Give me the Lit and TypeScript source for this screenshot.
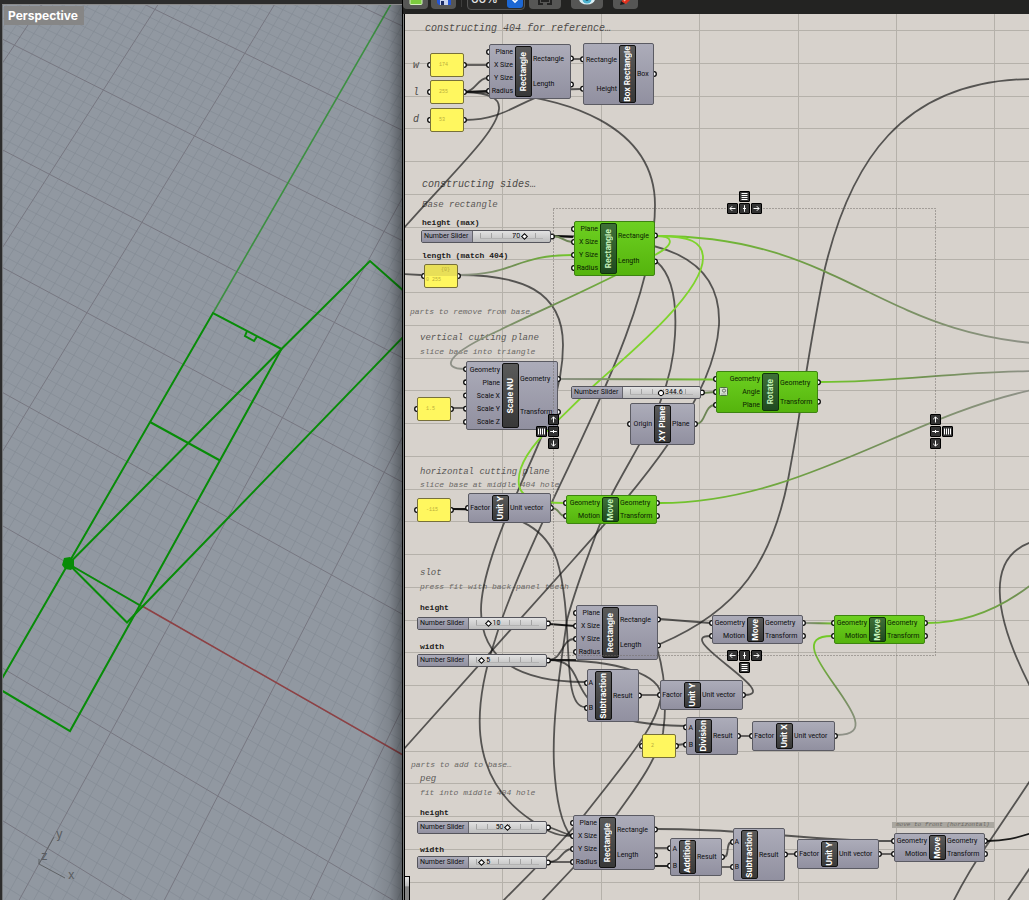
import { LitElement, html, svg, css, nothing } from "lit";
import { customElement } from "lit/decorators.js";
import { classMap } from "lit/directives/class-map.js";
import { styleMap } from "lit/directives/style-map.js";

/* ---------- 3D viewport ---------- */

type Pt = [number, number];

/* Solves the projective map that carries four ground-plane points to the screen. */
function projection(pairs: [Pt, Pt][]): (u: number, v: number) => Pt {
  const m: number[][] = [];
  for (const [[u, v], [x, y]] of pairs) {
    m.push([u, v, 1, 0, 0, 0, -u * x, -v * x, x]);
    m.push([0, 0, 0, u, v, 1, -u * y, -v * y, y]);
  }
  for (let c = 0; c < 8; c++) {
    let p = c;
    for (let r = c + 1; r < 8; r++) if (Math.abs(m[r][c]) > Math.abs(m[p][c])) p = r;
    [m[c], m[p]] = [m[p], m[c]];
    for (let r = 0; r < 8; r++) {
      if (r === c) continue;
      const f = m[r][c] / m[c][c];
      for (let k = c; k < 9; k++) m[r][k] -= f * m[c][k];
    }
  }
  const h = m.map((row, i) => row[8] / row[i]);
  return (u, v) => {
    const w = h[6] * u + h[7] * v + 1;
    return [(h[0] * u + h[1] * v + h[2]) / w, (h[3] * u + h[4] * v + h[5]) / w];
  };
}

const ground = projection([
  [[-2, 4], [103.3, 90]],
  [[-1, 1], [29.3, 407.3]],
  [[2, 2], [384.3, 472.3]],
  [[3, -1], [328.3, 861.7]],
]);

const gridLines = (major: boolean) => {
  let d = "";
  const seg = (a: Pt, b: Pt) => `M${a[0].toFixed(1)},${a[1].toFixed(1)}L${b[0].toFixed(1)},${b[1].toFixed(1)}`;
  for (let i = -50; i <= 60; i++) {
    if ((i % 10 === 0) !== major || (major && i === 0)) continue;
    d += seg(ground(i / 10, -4), ground(i / 10, 7));
  }
  for (let j = -40; j <= 70; j++) {
    if ((j % 10 === 0) !== major) continue;
    d += seg(ground(-5, j / 10), ground(6, j / 10));
  }
  return d;
};

@customElement("model-viewport")
export class ModelViewport extends LitElement {
  static styles = css`
    :host { display: block; position: relative; overflow: hidden; background: #9198a1;
      border-top: 1px solid #8b8b8b; border-left: 1px solid #74777a; }
    .scene { position: absolute; inset: 0; width: 100%; height: 100%; display: block; }
    .minor { stroke: #838a93; stroke-width: 1; opacity: .65; fill: none; }
    .major { stroke: #777781; stroke-width: 1; fill: none; }
    .curve { stroke: #078c07; stroke-width: 2; fill: none; }
    .axis-x { stroke: #8e4144; stroke-width: 1.6; }
    .axis-y { stroke: #3c8f41; stroke-width: 1.6; }
    .gizmo { stroke: #5f6265; stroke-width: 1; fill: none; }
    .gizmo-text { font: 12px "Inter", sans-serif; fill: #5a5d60; }
    .title { position: relative; display: block; width: fit-content; margin: 1px; padding: 0 6px 0 4px; background: #868686;
      color: #fff; font: 700 12px/19px "Inter", sans-serif; }
    .shade { position: absolute; inset: 0 0 0 auto; width: 32px;
      background: linear-gradient(90deg, rgba(0,0,0,0), rgba(0,0,0,.12) 60%, rgba(0,0,0,.38)); }
  `;
  render() {
    return html`
      <svg class="scene" role="img" aria-label="Perspective model">
        <g transform="translate(-3 -5)">
          <path class="minor" d=${gridLines(false)} />
          <path class="major" d=${gridLines(true)} />
          <line class="axis-y" x1="391" y1="4" x2="213" y2="313" />
          <line class="axis-x" x1="142" y1="606" x2="404" y2="755.5" />
          <path class="curve" d="M0,682 L213,313 L281.5,349 L165,560 L70,731 L0,689.5" />
          <path class="curve" d="M68.5,564 L281.5,349 L370,261 L405,292 M405,335 L127,622.5 L68.5,564 L141,606" />
          <path class="curve" d="M150,422 L220,460.5 M247,331 L245,336 L254,341 L257,336.5" />
          <path d="M64,558 L70,557 L74,560 L74,567 L71,570 L65,569 L62,565 Z" fill="#078c07" />
          <path class="gizmo" d="M39,859 L39,864 L54,837 M39,864 L65,878" />
          <text class="gizmo-text" x="56" y="838">y</text>
          <text class="gizmo-text" x="41" y="860">z</text>
          <text class="gizmo-text" x="68" y="879">x</text>
        </g>
      </svg>
      <div class="shade"></div>
      <span class="title">Perspective</span>
    `;
  }
}

/* ---------- Toolbar ---------- */

@customElement("canvas-toolbar")
export class CanvasToolbar extends LitElement {
  static styles = css`
    :host { display: flex; align-items: flex-end; height: 14px; padding-bottom: 5px; box-sizing: border-box;
      overflow: hidden; background: #232322; }
    .tool { flex: none; width: 25px; height: 20px; padding: 0; margin-right: 3px; border: 0; border-radius: 4px;
      background: #565655; display: grid; place-items: center; }
    .tool.wide { width: 32px; margin-right: 10px; }
    .rule { flex: none; width: 1px; height: 12px; margin: 0 5px 2px 2px; background: #3d3d3c; }
    .zoom { flex: none; position: relative; display: block; width: 58px; height: 20px; margin-right: 4px; }
    .zoom select { appearance: none; box-sizing: border-box; width: 100%; height: 100%; padding: 0 0 2px 3px; margin: 0;
      border: 1px solid #565655; border-radius: 4px; background: #2b2b2a; color: #e4e4e4;
      font: 500 12px/16px "Inter", sans-serif; }
    .chev { position: absolute; right: 1px; top: 0; pointer-events: none; }
  `;
  render() {
    return html`
      <button class="tool" aria-label="Open"><svg width="14" height="16"><rect x="1" y="1" width="12" height="12.5" rx="1" fill="#7ccb3e" stroke="#d5f0bf" /></svg></button>
      <button class="tool" aria-label="Save"><svg width="16" height="18"><path d="M1,1H15V15H3L1,13Z" fill="#2455d6" /><rect x="4" y="1" width="8" height="6" fill="#7aa0f5" /><rect x="4" y="10" width="8" height="5" fill="#c9d3ee" /><rect x="5" y="11" width="3" height="4" fill="#1c2c66" /></svg></button>
      <i class="rule"></i>
      <label class="zoom">
        <select aria-label="Zoom"><option>66%</option><option>100%</option></select>
        <svg class="chev" width="17" height="19"><rect width="16" height="19" rx="3" fill="#1c67d4" /><path d="M5,10 L8,13 L11,10" fill="none" stroke="#fff" stroke-width="1.6" /></svg>
      </label>
      <button class="tool wide" aria-label="Zoom extents"><svg width="16" height="18"><path d="M2,9V14H6M14,9V14H10M5,9H11V11H5Z" fill="none" stroke="#222" stroke-width="2" /></svg></button>
      <button class="tool wide" aria-label="Preview"><svg width="18" height="20"><ellipse cx="9" cy="10" rx="8" ry="5.5" fill="#d9eef5" /><circle cx="9" cy="10" r="4.6" fill="#4cb1cf" /><circle cx="9" cy="10" r="1.8" fill="#15313b" /></svg></button>
      <button class="tool" aria-label="Sketch"><svg width="18" height="20"><path d="M4,13 L12,3 L17,7 L9,15 Z" fill="#e0301e" /><path d="M3,16 L4,12 L8,15 Z" fill="#1d1d1d" /><path d="M7,12 L14,5" stroke="#ffb38f" stroke-width="1.4" /></svg></button>
    `;
  }
}

/* ---------- Node canvas ---------- */

interface Comp { x: number; y: number; w: number; h: number; bar: number; name: string; ins: string[]; outs: string[]; on?: boolean; chip?: boolean }
interface Slider { x: number; y: number; label: string; value: number; max: number; before?: boolean; round?: boolean }
interface Panel { x: number; y: number; text: string; index?: string; label: string }
interface Note { x: number; y: number; text: string; kind: "xl" | "lg" | "md" | "head" | "tag" }
type Tone = "dark" | "black" | "lime" | "fade" | "rise" | "olive";
interface Wire { d: string; tone: Tone; from?: Pt; to?: Pt }

/* World position of the top left corner of the visible canvas. */
const VIEW: Pt = [405, 14];

const rectIns = ["Plane", "X Size", "Y Size", "Radius"];
const rectOuts = ["Rectangle", "Length"];
const moveIns = ["Geometry", "Motion"];
const moveOuts = ["Geometry", "Transform"];

const comps: Comp[] = [
  { x: 489, y: 44, w: 82, h: 55, bar: 26, name: "Rectangle", ins: rectIns, outs: rectOuts },
  { x: 583, y: 43, w: 71, h: 62, bar: 36, name: "Box Rectangle", ins: ["Rectangle", "Height"], outs: ["Box"] },
  { x: 574, y: 221, w: 81, h: 55, bar: 26, name: "Rectangle", ins: rectIns, outs: rectOuts, on: true },
  { x: 466, y: 361, w: 92, h: 69, bar: 36, name: "Scale NU", ins: ["Geometry", "Plane", "Scale X", "Scale Y", "Scale Z"], outs: moveOuts },
  { x: 716, y: 371, w: 102, h: 42, bar: 46, name: "Rotate", ins: ["Geometry", "Angle", "Plane"], outs: moveOuts, on: true, chip: true },
  { x: 630, y: 403, w: 65, h: 42, bar: 24, name: "XY Plane", ins: ["Origin"], outs: ["Plane"] },
  { x: 468, y: 493, w: 83, h: 30, bar: 24, name: "Unit Y", ins: ["Factor"], outs: ["Unit vector"] },
  { x: 566, y: 495, w: 91, h: 29, bar: 36, name: "Move", ins: moveIns, outs: moveOuts, on: true },
  { x: 576, y: 605, w: 82, h: 55, bar: 26, name: "Rectangle", ins: rectIns, outs: rectOuts },
  { x: 712, y: 615, w: 91, h: 29, bar: 35, name: "Move", ins: moveIns, outs: moveOuts },
  { x: 834, y: 615, w: 91, h: 29, bar: 35, name: "Move", ins: moveIns, outs: moveOuts, on: true },
  { x: 587, y: 669, w: 52, h: 53, bar: 8, name: "Subtraction", ins: ["A", "B"], outs: ["Result"] },
  { x: 660, y: 680, w: 83, h: 30, bar: 24, name: "Unit Y", ins: ["Factor"], outs: ["Unit vector"] },
  { x: 686, y: 717, w: 52, h: 38, bar: 9, name: "Division", ins: ["A", "B"], outs: ["Result"] },
  { x: 752, y: 721, w: 83, h: 30, bar: 24, name: "Unit X", ins: ["Factor"], outs: ["Unit vector"] },
  { x: 573, y: 815, w: 82, h: 55, bar: 26, name: "Rectangle", ins: rectIns, outs: rectOuts },
  { x: 670, y: 838, w: 52, h: 38, bar: 9, name: "Addition", ins: ["A", "B"], outs: ["Result"] },
  { x: 733, y: 828, w: 52, h: 53, bar: 8, name: "Subtraction", ins: ["A", "B"], outs: ["Result"] },
  { x: 797, y: 839, w: 82, h: 30, bar: 24, name: "Unit Y", ins: ["Factor"], outs: ["Unit vector"] },
  { x: 894, y: 833, w: 91, h: 29, bar: 35, name: "Move", ins: moveIns, outs: moveOuts },
];

const sliders: Slider[] = [
  { x: 421, y: 230, label: "height (max)", value: 70, max: 100, before: true },
  { x: 571, y: 386, label: "angle", value: 344.6, max: 700, round: true },
  { x: 417, y: 617, label: "slot height", value: 10, max: 50 },
  { x: 417, y: 654, label: "slot width", value: 5, max: 50 },
  { x: 417, y: 821, label: "peg height", value: 50, max: 100, before: true },
  { x: 417, y: 856, label: "peg width", value: 5, max: 50 },
];

const panels: Panel[] = [
  { x: 430, y: 53, text: "174", label: "w" },
  { x: 430, y: 80, text: "255", label: "l" },
  { x: 430, y: 108, text: "53", label: "d" },
  { x: 424, y: 264, text: "255", index: "{0}", label: "length" },
  { x: 417, y: 397, text: "1.5", label: "scale" },
  { x: 417, y: 498, text: "-115", label: "offset" },
  { x: 642, y: 734, text: "2", label: "divisor" },
];

const notes: Note[] = [
  { x: 425, y: 28, text: "constructing 404 for reference…", kind: "xl" },
  { x: 413, y: 65, text: "w", kind: "xl" },
  { x: 413, y: 92, text: "l", kind: "xl" },
  { x: 413, y: 119, text: "d", kind: "xl" },
  { x: 422, y: 184, text: "constructing sides…", kind: "xl" },
  { x: 422, y: 204, text: "Base rectangle", kind: "lg" },
  { x: 422, y: 222, text: "height (max)", kind: "head" },
  { x: 422, y: 255, text: "length (match 404)", kind: "head" },
  { x: 410, y: 311, text: "parts to remove from base…", kind: "md" },
  { x: 420, y: 337, text: "vertical cutting plane", kind: "lg" },
  { x: 420, y: 351, text: "slice base into triangle", kind: "md" },
  { x: 420, y: 471, text: "horizontal cutting plane", kind: "lg" },
  { x: 420, y: 484, text: "slice base at middle 404 hole", kind: "md" },
  { x: 420, y: 572, text: "slot", kind: "lg" },
  { x: 420, y: 586, text: "press fit with back panel teeth", kind: "md" },
  { x: 420, y: 607, text: "height", kind: "head" },
  { x: 420, y: 646, text: "width", kind: "head" },
  { x: 411, y: 764, text: "parts to add to base…", kind: "md" },
  { x: 420, y: 778, text: "peg", kind: "lg" },
  { x: 420, y: 792, text: "fit into middle 404 hole", kind: "md" },
  { x: 420, y: 812, text: "height", kind: "head" },
  { x: 420, y: 849, text: "width", kind: "head" },
  { x: 892, y: 825, text: "move to front (horizontal)", kind: "tag" },
];

const wires: Wire[] = [
  { tone: "dark", d: "M465,65 H487" },
  { tone: "dark", d: "M465,92 C475,92 478,78 487,78" },
  { tone: "black", d: "M465,92 L487,91" },
  { tone: "dark", d: "M465,92 C490,93 500,98 499,109 C497,132 455,170 403,229" },
  { tone: "dark", d: "M465,120 C515,120 525,89 581,89" },
  { tone: "dark", d: "M573,59 H581" },
  { tone: "dark", d: "M465,92 C570,92 655,128 655,205 C655,290 600,400 552,502 C540,528 510,590 495,640 C475,700 464,775 531,820 C545,830 555,836 571,836" },
  { tone: "dark", d: "M459,275 C520,275 563,290 563,345 C563,400 535,450 517,493 C500,530 481,580 481,610 C481,660 520,682 585,682" },
  { tone: "dark", d: "M657,262 C672,275 677,300 675,335 C672,400 640,440 612,494 C595,535 575,590 567,620 C560,670 552,720 554,765 C556,800 562,825 571,836" },
  { tone: "dark", d: "M552,236 C660,236 722,255 719,325 C714,400 640,485 573,560 L403,750" },
  { tone: "dark", d: "M452,509 C525,509 548,535 557,560 C575,620 560,707 585,707" },
  { tone: "dark", d: "M403,274 L421,275" },
  { tone: "black", d: "M553,236 L573,237" },
  { tone: "olive", d: "M553,236 C562,236 564,242 572,242" },
  { tone: "dark", d: "M452,408 H465" },
  { tone: "black", d: "M452,509 H466" },
  { tone: "black", d: "M549,624 L575,626" },
  { tone: "dark", d: "M549,660 C562,660 562,639 574,639" },
  { tone: "black", d: "M549,660 H576" },
  { tone: "dark", d: "M549,660 C600,660 545,724 685,726" },
  { tone: "dark", d: "M549,660 C620,660 663,675 661,698 C655,725 635,750 611,781 L585,814 C560,845 535,868 502,902" },
  { tone: "dark", d: "M657,648 C665,675 667,705 663,733 C655,765 630,795 617,814 L573,868 L541,902" },
  { tone: "dark", d: "M660,619 L710,623" },
  { tone: "dark", d: "M660,644 C740,610 772,560 788,480 C803,400 810,340 825,268 C850,165 900,80 1032,79" },
  { tone: "dark", d: "M745,695 C783,695 672,636 710,636" },
  { tone: "dark", d: "M640,695 H659" },
  { tone: "dark", d: "M677,745 L685,744" },
  { tone: "dark", d: "M740,736 H750" },
  { tone: "dark", d: "M1032,542 C988,556 990,610 1032,690" },
  { tone: "dark", d: "M1032,778 L987,845 C975,862 964,880 953,902" },
  { tone: "dark", d: "M1032,865 L1007,902" },
  { tone: "black", d: "M987,841 C1005,841 1016,838 1032,833" },
  { tone: "dark", d: "M657,829 C760,829 800,841 892,841" },
  { tone: "dark", d: "M549,827 L572,836" },
  { tone: "dark", d: "M549,862 C562,862 561,849 572,849" },
  { tone: "dark", d: "M549,862 H572" },
  { tone: "dark", d: "M655,848 H668" },
  { tone: "black", d: "M655,866 H668" },
  { tone: "dark", d: "M724,857 C730,857 725,842 732,842" },
  { tone: "dark", d: "M722,867 H732" },
  { tone: "dark", d: "M787,854 H796" },
  { tone: "dark", d: "M881,854 H893" },
  { tone: "fade", from: [657, 236], to: [1029, 343], d: "M657,236 C850,236 880,345 1075,345" },
  { tone: "lime", d: "M657,236 C690,236 703,242 703,258 C703,290 640,345 600,380 C580,398 565,414 553,425 C535,442 516,465 519,485 C521,500 545,503 564,503" },
  { tone: "lime", d: "M657,236 C672,236 677,243 655,255" },
  { tone: "fade", from: [655, 255], to: [460, 360], d: "M655,255 C590,290 540,310 500,330 C446,354 440,369 465,369" },
  { tone: "rise", from: [459, 275], to: [573, 255], d: "M459,275 C515,275 515,255 573,255" },
  { tone: "rise", from: [559, 379], to: [716, 380], d: "M559,379 L715,379.5" },
  { tone: "olive", d: "M703,393 L715,392" },
  { tone: "olive", d: "M696,424 C706,424 704,405 715,405" },
  { tone: "fade", from: [820, 382], to: [1029, 371], d: "M820,382 C900,382 950,372 1032,371" },
  { tone: "fade", from: [660, 503], to: [1029, 391], d: "M660,503 C800,503 905,417 1032,390" },
  { tone: "olive", d: "M552,508 C560,508 558,516 565,516" },
  { tone: "rise", from: [805, 623], to: [833, 624], d: "M805,623 L833,623.5" },
  { tone: "rise", from: [845, 735], to: [828, 640], d: "M837,735 C903,735 767,636 832,636" },
  { tone: "fade", from: [927, 623], to: [1100, 560], d: "M927,623 C970,623 1005,605 1032,584" },
];

const toneColor: Record<Tone, string> = {
  dark: "rgba(18,18,18,.66)", black: "rgba(0,0,0,.88)", lime: "#7ed42c", fade: "", rise: "", olive: "#6d8555",
};

const rowY = (c: Comp, i: number, n: number) => c.y + 1.5 + ((c.h - 3) * (i + 0.5)) / n;
const at = (o: { x: number; y: number }) => ({ left: `${o.x}px`, top: `${o.y}px` });

type Glyph = "up" | "down" | "left" | "right" | "plusH" | "plusV" | "rows" | "cols";
const glyphs: Record<Glyph, string> = {
  up: "M5.5,8.5V3M3.2,5.2L5.5,2.9L7.8,5.2",
  down: "M5.5,2.5V8M3.2,5.8L5.5,8.1L7.8,5.8",
  left: "M8.5,5.5H3M5.2,3.2L2.9,5.5L5.2,7.8",
  right: "M2.5,5.5H8M5.8,3.2L8.1,5.5L5.8,7.8",
  plusH: "M2.2,5.5H8.8M5.5,4V7",
  plusV: "M5.5,2.2V8.8M4,5.5H7",
  rows: "M2.5,2.5H8.5M2.5,4.5H8.5M2.5,6.5H8.5M2.5,8.5H8.5",
  cols: "M2.5,2.5V8.5M4.5,2.5V8.5M6.5,2.5V8.5M8.5,2.5V8.5",
};
const keys: [number, number, Glyph][] = [
  [739, 191, "rows"], [727, 203, "left"], [739, 203, "plusV"], [751, 203, "right"],
  [739, 662, "rows"], [727, 650, "left"], [739, 650, "plusV"], [751, 650, "right"],
  [536, 426, "cols"], [548, 414, "up"], [548, 426, "plusH"], [548, 438, "down"],
  [942, 426, "cols"], [930, 414, "up"], [930, 426, "plusH"], [930, 438, "down"],
];

@customElement("node-canvas")
export class NodeCanvas extends LitElement {
  static styles = css`
    :host { display: block; position: relative; overflow: hidden; background: #d7d2cc; }
    .world { position: absolute; }
    .layer { position: absolute; left: 0; top: 0; width: 3000px; height: 2000px; pointer-events: none; }
    .grid { stroke: #b5b1aa; stroke-width: 1; shape-rendering: crispEdges; }
    .wire { fill: none; stroke-width: 1.8; }
    .grip { fill: #fff; stroke: #0a0a0a; stroke-width: 1.3; }
    .marquee { fill: none; stroke: #6e6b67; stroke-width: 1; stroke-dasharray: 1 2; }

    .note { position: absolute; white-space: pre; font-family: "Liberation Mono", monospace; line-height: 12px;
      margin-top: -5px; font-style: italic; color: #62605d; }
    .note.xl { font-size: 10px; color: #4c4a48; }
    .note.lg { font-size: 9px; color: #5a5856; }
    .note.md { font-size: 8px; color: #6b6966; }
    .note.head { font-size: 8px; font-style: normal; font-weight: 700; color: #1c1b1a; }
    .note.tag { font-size: 6px; line-height: 6px; margin-top: -3px; padding: 0 4px; color: #6d6a66; background: #aaa7a0; }

    .comp { position: absolute; display: flex; box-sizing: border-box; padding: 1px 0; border: 1px solid #5b5b63;
      border-radius: 2px; background: linear-gradient(#acacb9, #9190a0);
      color: #0c0c0e; font: 400 7px/10px "Roboto", sans-serif; }
    .comp.on { background: linear-gradient(#6dd021, #55b40d); border-color: #3d8410; color: #0a2202; }
    .col { display: flex; flex-direction: column; justify-content: space-around; white-space: nowrap; }
    .ins { align-items: flex-end; box-sizing: border-box; padding-right: 2px; flex: none; }
    .outs { flex: 1; min-width: 0; padding-left: 1px; }
    .bar { flex: none; width: 17px; box-sizing: border-box; border: 1px solid #111; border-radius: 2px;
      background: linear-gradient(#5a5a5a, #383838); color: #fff; display: flex; align-items: center; justify-content: center;
      font: 700 8px/15px "Inter", sans-serif; white-space: nowrap; }
    .bar span { flex: none; writing-mode: vertical-rl; rotate: 180deg; }
    .on .bar { background: linear-gradient(#3f7038, #1f4a20); border-color: #0f3608; color: #c9f5bd; }
    .chip { position: absolute; left: 2px; top: 15px; }

    .slider { position: absolute; display: flex; box-sizing: border-box; width: 130px; height: 13px;
      border: 1px solid #55555c; border-radius: 2px; background: linear-gradient(#e2e2e2, #bdbdbd);
      font: 400 7px/11px "Roboto", sans-serif; color: #0c0c0e; }
    .slider-name { flex: none; width: 51px; box-sizing: border-box; padding-left: 2px; border-right: 1px solid #66666e;
      background: linear-gradient(#acacb9, #9190a0); white-space: nowrap; }
    .slider-track { position: relative; flex: 1; padding: 0 4px; }
    .ticks { position: absolute; left: 7px; right: 7px; top: 2px; height: 5px; border-bottom: 1px solid #a9a9a9;
      background: repeating-linear-gradient(90deg, #8f8f8f 0 1px, transparent 1px 11px); opacity: .7; }
    .range { appearance: none; position: relative; display: block; width: 100%; height: 11px; margin: 0; background: none; }
    .range::-webkit-slider-thumb { appearance: none; width: 5px; height: 5px; box-sizing: border-box; rotate: 45deg;
      border: 1px solid #000; background: #fff; }
    .round .range::-webkit-slider-thumb { border-radius: 50%; width: 6px; height: 6px; }
    .value { position: absolute; top: 0; padding: 0 4px; }
    .value.before { translate: -100% 0; }

    .panel { position: absolute; box-sizing: border-box; width: 34px; height: 24px; padding: 0 0 0 8px;
      border: 1px solid #77703a; border-radius: 2px; background: #fff75f; color: #b9ad3c;
      font: 5px/22px "Liberation Mono", monospace; }
    .panel.indexed { background: linear-gradient(#e8df58 0 11px, #fff75f 11px); padding: 0 0 0 1px; line-height: 10px; }
    .panel.indexed span { display: block; }
    .panel .index { text-align: right; padding-right: 7px; }

    .key { position: absolute; width: 11px; height: 11px; padding: 0; border: 1px solid #000; border-radius: 1px;
      background: #333; box-sizing: border-box; }
    .key svg { display: block; margin: -1px; }
    .key path { fill: none; stroke: #fff; stroke-width: 1; }
    .scrap { position: absolute; left: -2px; bottom: 0; width: 7px; height: 24px; border: 1px solid #000; border-bottom: 0;
      background: linear-gradient(#e4e4e4, #bbb 40%, #858585 42%); box-sizing: border-box; }
  `;

  private grips() {
    const out: Pt[] = [];
    for (const c of comps) {
      c.ins.forEach((_, i) => out.push([c.x, rowY(c, i, c.ins.length)]));
      c.outs.forEach((_, i) => out.push([c.x + c.w, rowY(c, i, c.outs.length)]));
    }
    for (const s of sliders) out.push([s.x + 131, s.y + 6.5]);
    for (const p of panels) out.push([p.x, p.y + 12], [p.x + 34, p.y + 12]);
    return out.map(([x, y]) => svg`<circle class="grip" cx=${x} cy=${y} r="2.3" />`);
  }

  private comp(c: Comp) {
    const box = { ...at(c), width: `${c.w}px`, height: `${c.h}px` };
    return html`<div class=${classMap({ comp: true, on: !!c.on })} style=${styleMap(box)}>
      <div class="col ins" style=${styleMap({ width: `${c.bar - 1}px` })}>${c.ins.map((t) => html`<span>${t}</span>`)}</div>
      <div class="bar"><span>${c.name}</span></div>
      <div class="col outs">${c.outs.map((t) => html`<span>${t}</span>`)}</div>
      ${c.chip ? html`<svg class="chip" width="9" height="9"><rect x=".5" y=".5" width="8" height="8" rx="1" fill="#d8e4d2" stroke="#4c6b40" /><circle cx="5" cy="3.6" r="1.6" fill="none" stroke="#444" stroke-width=".7" /><path d="M2,7H7" stroke="#999" stroke-width=".7" /></svg>` : nothing}
    </div>`;
  }

  private slider(s: Slider) {
    const f = s.value / s.max;
    return html`<label class=${classMap({ slider: true, round: !!s.round })} style=${styleMap(at(s))}>
      <span class="slider-name">Number Slider</span>
      <span class="slider-track">
        <i class="ticks"></i>
        <input class="range" type="range" min="0" max=${s.max} step="any" .value=${String(s.value)} aria-label=${s.label} />
        <span class=${classMap({ value: true, before: !!s.before })} style=${styleMap({ left: `calc(7px + (100% - 14px) * ${f.toFixed(3)})` })}>${s.value}</span>
      </span>
    </label>`;
  }

  render() {
    const range = (n: number) => Array.from({ length: n }, (_, i) => i);
    return html`<div class="world" style=${styleMap({ left: `${-VIEW[0]}px`, top: `${-VIEW[1]}px` })}>
      <svg class="layer">
        ${range(26).map((i) => { const x = Math.round(404 + 98.4 * i); return svg`<line class="grid" x1=${x + 0.5} x2=${x + 0.5} y1="0" y2="2000" />`; })}
        ${range(60).map((i) => { const y = Math.round(30 + 32.76 * i); return svg`<line class="grid" x1="400" x2="3000" y1=${y + 0.5} y2=${y + 0.5} />`; })}
      </svg>
      ${notes.map((n) => html`<span class="note ${n.kind}" style=${styleMap(at(n))}>${n.text}</span>`)}
      <svg class="layer" aria-hidden="true">
        <defs>
          ${wires.map((w, i) => (w.from && w.to ? svg`<linearGradient id="w${i}" gradientUnits="userSpaceOnUse" x1=${w.from[0]} y1=${w.from[1]} x2=${w.to[0]} y2=${w.to[1]}>
            <stop offset="0" stop-color=${w.tone === "fade" ? "#72c928" : "#8f9188"} />
            <stop offset=".5" stop-color="#6f9150" />
            <stop offset="1" stop-color=${w.tone === "fade" ? "#8f9188" : "#72c928"} />
          </linearGradient>` : nothing))}
        </defs>
        ${wires.map((w, i) => svg`<path class="wire" d=${w.d} stroke=${w.from ? `url(#w${i})` : toneColor[w.tone]} />`)}
        ${this.grips()}
      </svg>
      ${panels.map((p) => html`<div class=${classMap({ panel: true, indexed: !!p.index })} style=${styleMap(at(p))} aria-label=${p.label}>${p.index
        ? html`<span class="index">${p.index}</span><span>0 ${p.text}</span>` : p.text}</div>`)}
      ${comps.map((c) => this.comp(c))}
      ${sliders.map((s) => this.slider(s))}
      <svg class="layer" aria-hidden="true"><rect class="marquee" x="553.5" y="208.5" width="382" height="447" /></svg>
      ${keys.map(([x, y, g]) => html`<button class="key" style=${styleMap(at({ x, y }))} aria-label=${g}><svg width="11" height="11"><path d=${glyphs[g]} /></svg></button>`)}
    </div>
    <div class="scrap"></div>`;
  }
}

/* ---------- Shell ---------- */

@customElement("app-root")
export class AppRoot extends LitElement {
  static styles = css`
    :host { display: grid; grid-template-columns: minmax(200px, 402px) minmax(0, 1fr); height: 100vh; overflow: hidden; background: #2b2b2b; }
    .left { display: flex; padding: 4px 0 0 2px; background: #2c2c2c; }
    .left model-viewport { flex: 1; }
    .right { display: flex; flex-direction: column; min-width: 0;
      background: linear-gradient(90deg, #000 0 1px, #7b7d7c 1px 2px, #000 2px 3px, #232322 3px); }
    .right node-canvas { flex: 1; margin-left: 3px; }
    .right canvas-toolbar { margin-left: 1px; }
  `;
  render() {
    return html`
      <section class="left"><model-viewport></model-viewport></section>
      <section class="right"><canvas-toolbar></canvas-toolbar><node-canvas></node-canvas></section>
    `;
  }
}
